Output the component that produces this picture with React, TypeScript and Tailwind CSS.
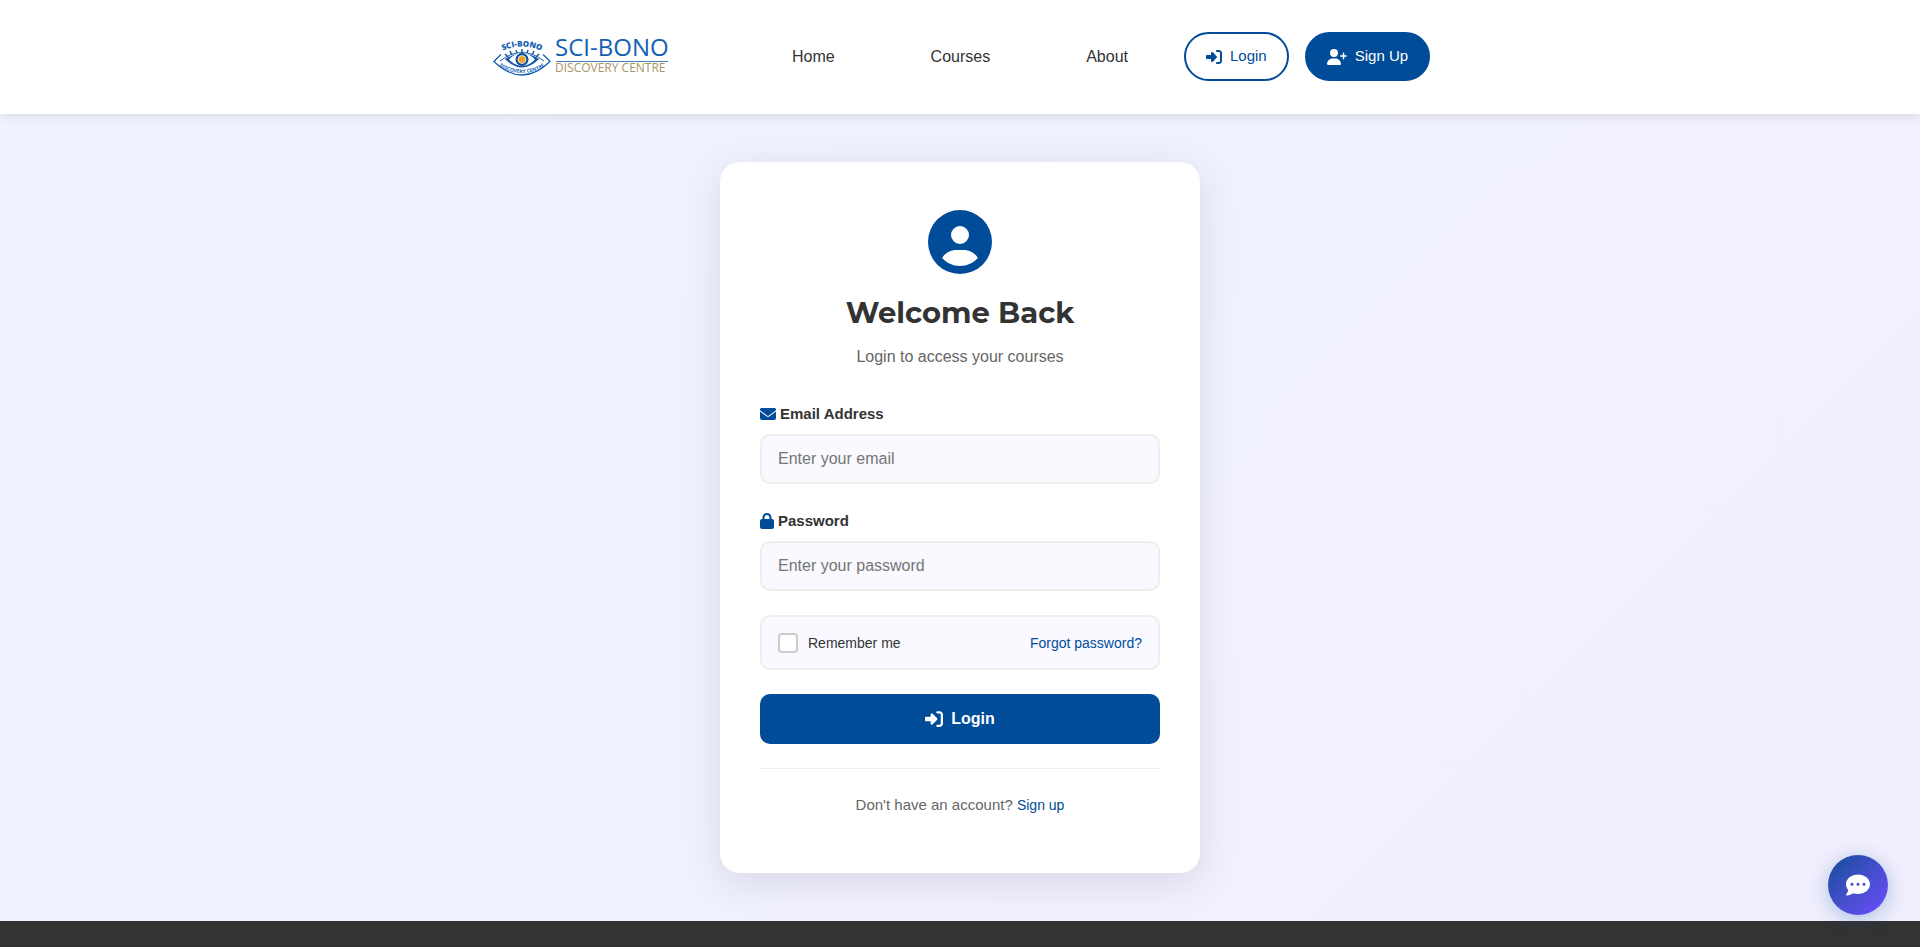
import React from "react";
import {
  FaRightToBracket,
  FaUserPlus,
  FaCircleUser,
  FaEnvelope,
  FaLock,
  FaCommentDots,
} from "react-icons/fa6";

const lashes = [
  [18, 24, 15, 21],
  [22, 22, 20, 18],
  [27, 20, 26, 17],
  [32, 20, 32, 16],
  [37, 20, 38, 17],
  [42, 22, 44, 18],
  [46, 24, 49, 21],
];

function Logo() {
  return (
    <svg width="182" height="50" viewBox="0 -1 182 50" className="block overflow-visible" role="img" aria-label="Sci-Bono Discovery Centre">
      <defs>
        <path id="arc-top" d="M6 21 Q32 6 58 21" />
        <path id="arc-bottom" d="M6 31 Q32 49 58 31" />
      </defs>
      <path d="M11 21.500 Q7 25 4 28.500 Q32 55.500 60 28.500 Q57 25 53 21.500" fill="none" stroke="#1560b3" strokeWidth="1.300" />
      <path d="M10 28 Q32 11 54 28" fill="none" stroke="#1560b3" strokeWidth="1" />
      <path d="M15 26 Q32 15 49 26 Q32 43 15 26 Z" fill="#0f57a8" />
      <path d="M19 26.500 Q25 20 32 20 Q25 27 32 33 Q25 33 19 26.500 Z" fill="#ffffff" />
      <path d="M45 26.500 Q39 20 32 20 Q39 27 32 33 Q39 33 45 26.500 Z" fill="#ffffff" />
      {lashes.map(([x1, y1, x2, y2]) => (
        <line key={x1} x1={x1} y1={y1} x2={x2} y2={y2} stroke="#0f4f9b" strokeWidth="1.400" />
      ))}
      <circle cx="32" cy="26.500" r="6.500" fill="#0f4f9b" />
      <circle cx="32" cy="26.500" r="4.300" fill="#ffffff" />
      <circle cx="32" cy="26.500" r="3.500" fill="#f0a126" />
      <text fontFamily="Open Sans, sans-serif" fontWeight="800" fontSize="8" fill="#1560b3">
        <textPath href="#arc-top" startOffset="50%" textAnchor="middle">SCI-BONO</textPath>
      </text>
      <text fontFamily="Open Sans, sans-serif" fontWeight="700" fontSize="5" fill="#1560b3">
        <textPath href="#arc-bottom" startOffset="50%" textAnchor="middle">DISCOVERY CENTRE</textPath>
      </text>
      <text x="65" y="23" fontFamily="Open Sans, sans-serif" fontSize="24" fill="#1560b3">SCI-BONO</text>
      <rect x="66" y="28" width="112" height="1" fill="#3f7fc4" />
      <text x="65" y="39" fontFamily="Open Sans, sans-serif" fontSize="12" fill="#a8956a">DISCOVERY CENTRE</text>
    </svg>
  );
}

const inputClass =
  "h-[50px] w-full rounded-[10px] border-2 border-[#eeeeee] bg-[#f9f9ff] px-4 text-base text-[#333333] placeholder:text-[#757575] outline-none focus:border-[#004c99]";
const labelClass = "mb-2 flex items-center gap-1 text-[15px] leading-[25px] font-bold text-[#333333]";

export default function App() {
  return (
    <div className="flex min-h-screen flex-col bg-white font-['Liberation_Sans',Arial,sans-serif] text-[#333333]">
      <header className="relative z-10 flex flex-wrap items-center justify-center bg-white py-8 shadow-[0_2px_10px_rgba(0,0,0,0.1)]">
        <a href="#home" className="mr-30">
          <Logo />
        </a>
        <nav className="mr-14 flex gap-24 text-base">
          <a href="#home">Home</a>
          <a href="#courses">Courses</a>
          <a href="#about">About</a>
        </nav>
        <div className="flex gap-4 self-start text-[15px]">
          <button
            type="button"
            className="flex h-[49px] items-center gap-2 rounded-full border-2 border-[#004c99] bg-white px-5 text-[#004c99]"
          >
            <FaRightToBracket size={16} />
            Login
          </button>
          <button
            type="button"
            className="flex h-[49px] items-center gap-2 rounded-full border-2 border-[#004c99] bg-[#004c99] px-5 text-white"
          >
            <FaUserPlus className="h-4 w-5" />
            Sign Up
          </button>
        </div>
      </header>

      <main className="flex justify-center bg-linear-135 from-[#eff2ff] to-[#f1effe] px-4 py-12">
        <section className="w-full max-w-[480px] rounded-[20px] bg-white px-10 pt-12 pb-14 shadow-[0_10px_40px_rgba(0,0,0,0.1)]">
          <div className="mb-8 flex flex-col items-center text-center">
            <FaCircleUser size={64} className="mb-4 text-[#004c99]" />
            <h1 className="mb-2 font-[Montserrat,Inter,sans-serif] text-[29px] leading-[46px] font-bold">
              Welcome Back
            </h1>
            <p className="text-base leading-[25px] text-[#666666]">Login to access your courses</p>
          </div>

          <form onSubmit={(e) => e.preventDefault()}>
            <div className="mb-6">
              <label htmlFor="email" className={labelClass}>
                <FaEnvelope size={16} className="text-[#004c99]" />
                Email Address
              </label>
              <input id="email" type="email" placeholder="Enter your email" className={inputClass} />
            </div>
            <div className="mb-6">
              <label htmlFor="password" className={labelClass}>
                <FaLock className="h-4 w-3.5 text-[#004c99]" />
                Password
              </label>
              <input id="password" type="password" placeholder="Enter your password" className={inputClass} />
            </div>
            <div className="mb-6 flex h-[55px] items-center justify-between rounded-[10px] border-2 border-[#eeeeee] bg-[#f9f9ff] px-4 text-sm">
              <label htmlFor="remember" className="flex items-center gap-2.5">
                <input
                  id="remember"
                  type="checkbox"
                  className="size-5 appearance-none rounded border-2 border-[#cccccc] bg-white checked:bg-[#004c99]"
                />
                Remember me
              </label>
              <a href="#forgot" className="text-[#004c99]">Forgot password?</a>
            </div>
            <button
              type="submit"
              className="mb-6 flex h-[50px] w-full items-center justify-center gap-2 rounded-[10px] bg-[#004c99] text-base font-bold text-white"
            >
              <FaRightToBracket size={18} />
              Login
            </button>
          </form>

          <p className="border-t border-[#eeeeee] pt-6 text-center text-[15px] leading-6 text-[#666666]">
            Don't have an account?{" "}
            <a href="#signup" className="text-sm text-[#004c99]">Sign up</a>
          </p>
        </section>
      </main>

      <footer className="min-h-6 flex-1 bg-[#333333]" />

      <button
        type="button"
        aria-label="Open chat"
        className="fixed right-8 bottom-8 z-20 flex size-15 items-center justify-center rounded-full bg-linear-135 from-[#004c99] to-[#6c4cff] text-white shadow-[0_4px_20px_rgba(0,76,153,0.3)]"
      >
        <FaCommentDots size={24} />
      </button>
    </div>
  );
}
